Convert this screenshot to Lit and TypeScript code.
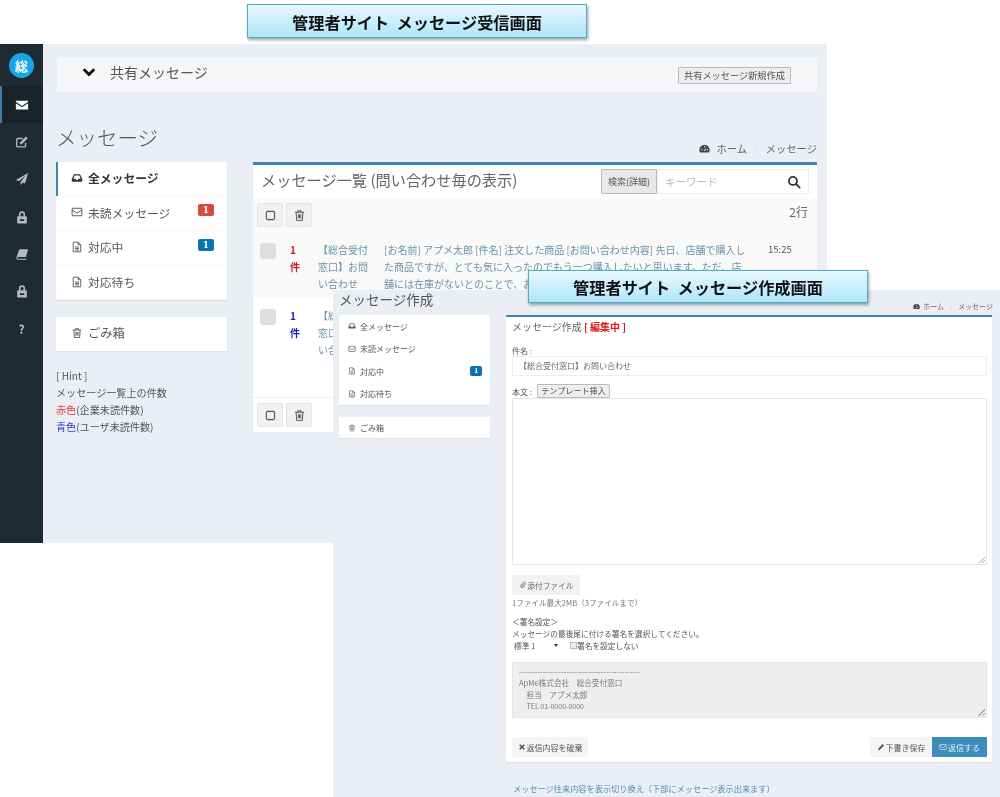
import { LitElement, html, css } from 'lit';
import { customElement } from 'lit/decorators.js';

const icons: Record<string, unknown> = {
  envelope: html`<svg viewBox="0 0 16 16"><path fill="currentColor" d="M1 3h14v1.4L8 9 1 4.4z"/><path fill="currentColor" d="M1 6l7 4.6L15 6v7H1z"/></svg>`,
  envelopeO: html`<svg viewBox="0 0 16 16" fill="none" stroke="currentColor" stroke-width="1.3"><rect x="1.5" y="3" width="13" height="10" rx="1"/><path d="M1.5 5.2L8 9.6l6.5-4.4"/></svg>`,
  edit: html`<svg viewBox="0 0 16 16" fill="none" stroke="currentColor" stroke-width="1.5"><path d="M12 9v3.5a1 1 0 0 1-1 1H3a1 1 0 0 1-1-1V5a1 1 0 0 1 1-1h6"/><path fill="currentColor" stroke="none" d="M6 8.2L12.6 1.8l2 2L8 10.4l-2.4.4z"/></svg>`,
  plane: html`<svg viewBox="0 0 16 16"><path fill="currentColor" d="M15 1L1 9l3.6 1.5L12 4l-5.6 7.3V15l2.3-3 2.8 1.2z"/></svg>`,
  lock: html`<svg viewBox="0 0 16 16"><path fill="currentColor" fill-rule="evenodd" d="M4.5 7V5a3.5 3.5 0 0 1 7 0v2h1a1 1 0 0 1 1 1v6.5a1 1 0 0 1-1 1h-9a1 1 0 0 1-1-1V8a1 1 0 0 1 1-1zm1.8 0h3.4V5a1.700 1.700 0 0 0-3.400 0zM5.500 10.500v2h5v-2z"/></svg>`,
  book: html`<svg viewBox="0 0 16 16"><path fill="currentColor" d="M5 2.500h10l-2.500 9H3.800a1 1 0 0 0 0 2h9.400l-.4 1H3.500A2 2 0 0 1 1.600 12z"/></svg>`,
  inbox: html`<svg viewBox="0 0 16 16"><path fill="currentColor" fill-rule="evenodd" d="M4 3h8l3 6v3a1 1 0 0 1-1 1H2a1 1 0 0 1-1-1V9zm.9 1.500L3 9h3l1 1.500h2L10 9h3l-1.900-4.500z"/></svg>`,
  file: html`<svg viewBox="0 0 16 16" fill="none" stroke="currentColor" stroke-width="1.2"><path d="M3 1.600h6.500L13 5v9.400H3z"/><path d="M9.500 1.600V5H13M5.500 8h5M5.500 10h5M5.500 12h5"/></svg>`,
  trash: html`<svg viewBox="0 0 16 16" fill="none" stroke="currentColor" stroke-width="1.2"><path d="M2.500 4h11M6 4V2.200h4V4M3.800 4l.7 10h7l.7-10M6.500 6.500v5M8 6.500v5M9.500 6.500v5"/></svg>`,
  square: html`<svg viewBox="0 0 16 16" fill="none" stroke="currentColor" stroke-width="1.4"><rect x="3" y="3" width="10" height="10" rx="1.500"/></svg>`,
  search: html`<svg viewBox="0 0 16 16" fill="none" stroke="currentColor" stroke-width="2"><circle cx="6.800" cy="6.800" r="4.600"/><path d="M10.200 10.200L14.500 14.500" stroke-linecap="round"/></svg>`,
  chevron: html`<svg viewBox="0 0 16 16" fill="none" stroke="currentColor" stroke-width="3.200"><path d="M2 4.800l6 6 6-6"/></svg>`,
  gauge: html`<svg viewBox="0 0 16 16"><path fill="currentColor" fill-rule="evenodd" d="M8 2.500a7.500 7.500 0 0 1 7.500 7.500c0 1.400-.4 2.700-1 3.800h-13a7.500 7.500 0 0 1-1-3.800A7.500 7.500 0 0 1 8 2.500zM7.200 4.200v2h1.600v-2zM3 9v1.500h2V9zm8 0v1.500h2V9zM7 11.800h2L10.500 6z"/></svg>`,
  clip: html`<svg viewBox="0 0 16 16" fill="none" stroke="currentColor" stroke-width="1.500"><path d="M13.500 8l-5 5a3 3 0 0 1-4.500-4.500l6-6a2 2 0 0 1 3 3L7.500 11a.9.9 0 0 1-1.500-1.500L10.500 5"/></svg>`,
  pencil: html`<svg viewBox="0 0 16 16"><path fill="currentColor" d="M11 2l3 3-8.500 8.500L2 14.500l1-3.500z"/></svg>`,
  times: html`<svg viewBox="0 0 16 16" fill="none" stroke="currentColor" stroke-width="3.400"><path d="M3.500 3.500l9 9M12.500 3.500l-9 9"/></svg>`,
};

const icon = (name: string) => html`<span class="ic">${icons[name]}</span>`;

@customElement('app-root')
export class AppRoot extends LitElement {
  static styles = css`
    :host {
      display: block;
      position: relative;
      width: 1000px;
      height: 797px;
      overflow: hidden;
      background: #fff;
      color: #666;
      font-family: 'Noto Sans CJK JP', 'Noto Sans', sans-serif;
      font-size: 11px;
      filter: blur(0.3px);
    }
    * { box-sizing: border-box; }
    .ic { display: inline-flex; flex: none; width: 1em; height: 1em; }
    .ic svg { width: 100%; height: 100%; display: block; }

    .caption {
      position: absolute;
      z-index: 5;
      display: flex;
      align-items: center;
      justify-content: center;
      width: 340px;
      height: 34px;
      padding-top: 1px;
      border: 1px solid #58a9c1;
      background: linear-gradient(#e6f8fe, #aee6f9);
      box-shadow: 1px 2px 3px rgba(60, 90, 100, 0.55);
      color: #111;
      font-size: 16.2px;
      font-weight: 700;
      white-space: pre;
    }
    .caption.one { left: 247px; top: 4px; }
    .caption.two { left: 528px; top: 270px; height: 33px; }

    .window { position: absolute; background: #ebeef5; }
    .inbox { left: 0; top: 44px; width: 827px; height: 499px; display: flex; }
    .compose {
      left: 333px;
      top: 290px;
      width: 667px;
      height: 507px;
      z-index: 2;
      display: grid;
      grid-template-columns: 151px 486px;
      grid-template-rows: 25px auto;
      column-gap: 16px;
      padding-left: 6px;
      align-content: start;
    }

    .side { width: 43px; background: #1f2b32; display: flex; flex-direction: column; }
    .avatar {
      width: 25px;
      height: 25px;
      margin: 9px 0 8px 9px;
      border-radius: 50%;
      background: #17a6ea;
      color: #fff;
      font-size: 13px;
      font-weight: 700;
      display: flex;
      align-items: center;
      justify-content: center;
    }
    .nav { height: 37.3px; display: flex; align-items: center; justify-content: center; color: #b4bbbe; font-size: 14px; }
    .nav.on { background: #18232a; color: #fff; box-shadow: inset 2px 0 0 #3b82ae; }
    .nav b { font-size: 12px; }

    .main { flex: 1; padding: 13px 10px 0 13px; }
    .shared {
      height: 36px;
      margin-left: 1px;
      background: #f5f6f7;
      border-bottom: 1px solid #e6e8ec;
      display: flex;
      align-items: center;
      padding: 0 26px 5px 25px;
      font-size: 14px;
      color: #555;
    }
    .shared .ic { font-size: 14px; color: #111; margin-right: 14px; }
    .shared span.t { flex: 1; }
    .shared button { height: 17px; width: 113px; margin-top: 6px; font-size: 9.2px; white-space: nowrap; }
    button {
      font: inherit;
      color: #555;
      padding: 0;
      border: 1px solid #bbb;
      border-radius: 1px;
      background: #eee;
    }

    .head { height: 69px; display: flex; justify-content: space-between; align-items: flex-end; padding-bottom: 6px; }
    .head h1 { margin: 0 0 4px; font-size: 20.5px; font-weight: 300; color: #555; line-height: 30px; }
    .crumb { display: flex; align-items: center; gap: 6px; font-size: 10.3px; color: #666; }
    .crumb .ic { color: #444; font-size: 11px; }
    .crumb i { color: #ccc; font-style: normal; font-size: 9px; margin: 0 2px; }

    .cols { display: flex; gap: 26px; align-items: flex-start; }
    .left { width: 171px; flex: none; }
    .card { background: #fff; box-shadow: 0 1px 1px rgba(0, 0, 0, 0.05); }
    .menu a {
      height: 34.6px;
      display: flex;
      align-items: center;
      gap: 5px;
      padding: 0 13px 2px 15px;
      font-size: 11.8px;
      color: #555;
      border-bottom: 1px solid #f7f7f7;
    }
    .menu a.on { box-shadow: inset 2px 0 0 #3f87b2; color: #333; font-weight: 700; }
    .menu a .ic { font-size: 12px; }
    .menu a span.t { flex: 1; }
    .badge {
      color: #fff;
      font-size: 9px;
      font-weight: 700;
      border-radius: 2px;
      padding: 0 5px;
      line-height: 12px;
      font-family: 'DejaVu Serif', serif;
      margin-top: -4px;
    }
    .badge.red { background: #d9493c; }
    .badge.blue { background: #0b73b4; }
    .bin { margin-top: 17px; height: 34px; display: flex; align-items: center; gap: 5px; padding: 0 0 2px 15px; font-size: 12.3px; color: #555; }
    .bin .ic { font-size: 12px; }
    .hint { margin-top: 16px; font-size: 10.1px; line-height: 17px; color: #555; }
    .hint .r { color: #e23b3b; }
    .hint .b { color: #2a3fc0; }

    .panel { width: 564px; height: 270px; background: #fff; border-top: 3px solid #3d86b3; }
    .panel-top { height: 33px; display: flex; align-items: flex-start; justify-content: space-between; padding: 0 8px; }
    .panel-top h2 { margin: 3px 0 0; font-size: 15.2px; font-weight: 400; color: #666; white-space: nowrap; }
    .search { display: flex; height: 25px; width: 208px; margin-top: 4px; }
    .search button { width: 56px; font-size: 9px; background: #e8e8e8; }
    .search div { flex: 1; display: flex; align-items: center; justify-content: space-between; border: 1px solid #eee; padding: 0 7px; color: #bbb; font-size: 10.5px; }
    .search .ic { color: #333; font-size: 14px; }
    .tools { height: 34px; background: #fafafa; display: flex; padding: 5px 9px 0 4px; justify-content: space-between; color: #666; font-size: 12px; }
    .tool { display: flex; gap: 3px; }
    .tool button { width: 26px; height: 24px; background: #f1f1f1; border-color: #e4e4e4; font-size: 13px; display: flex; align-items: center; justify-content: center; border-radius: 2px; }
    .row { display: flex; padding: 9px 0 0 7px; font-size: 10px; line-height: 17px; height: 66px; background: #f9f9f9; }
    .row.two { background: #fff; height: 99px; }
    .row .check { width: 16px; height: 16px; margin-top: 2px; background: #dcdfe0; border-radius: 3px; flex: none; }
    .row .count { width: 28px; margin-left: 14px; font-weight: 700; flex: none; }
    .row .subject { width: 50px; flex: none; color: #6a92ab; white-space: nowrap; }
    .row .msg { width: 384px; flex: none; margin-left: 16px; color: #6a92ab; white-space: nowrap; overflow: hidden; }
    .row .time { color: #555; font-size: 9.5px; white-space: nowrap; }
    .unread-red { color: #cf1d2e; }
    .unread-blue { color: #1c1ea8; }
    .foot { padding: 5px 4px; border-top: 1px solid #eee; }

    .compose h1 { margin: 0; font-size: 13.5px; font-weight: 400; color: #555; line-height: 19px; }
    .compose .crumb { justify-content: flex-end; font-size: 7px; gap: 3px; padding: 11px 0 0; align-self: start; margin-right: -1px; }
    .compose .crumb .ic { font-size: 7px; }
    .compose .crumb i { font-size: 7px; margin: 0 3px; }
    .compose .menu a { height: 22.5px; font-size: 8px; padding: 0 8px 0 9px; gap: 4px; border: 0; }
    .compose .menu a .ic { font-size: 8px; }
    .compose .badge { font-size: 6.5px; padding: 0 3.5px; line-height: 10px; margin: 0; }
    .compose .bin { margin-top: 12px; height: 21px; font-size: 8px; padding: 0 0 0 9px; gap: 4px; }
    .compose .bin .ic { font-size: 8px; }

    .form { height: 447px; background: #fff; border-top: 2px solid #3d86b3; padding: 0 5px 0 6px; font-size: 8px; color: #555; display: flex; flex-direction: column; box-shadow: 0 1px 1px rgba(0, 0, 0, 0.05); }
    .form > * { flex: none; }
    .form h2 { margin: 2px 0 0; height: 16px; font-size: 10px; font-weight: 400; line-height: 16px; color: #666; }
    .form h2 b { color: #e01b1b; }
    .lbl { margin-top: 10px; line-height: 12px; height: 12px; margin-bottom: -1px; }
    .box { height: 20px; border: 1px solid #eceef0; padding: 0 0 0 6px; line-height: 18px; color: #666; }
    .body-row { display: flex; align-items: center; gap: 5px; height: 14px; margin-top: 8px; }
    .body-row button { width: 73px; height: 14px; font-size: 8.1px; line-height: 12px; background: #eee; }
    .area { height: 167px; border: 1px solid #e4e6e9; position: relative; }
    .grip { position: absolute; right: 1px; bottom: 1px; width: 7px; height: 7px; background: linear-gradient(135deg, transparent 50%, #aaa 50%, #aaa 60%, transparent 60%, transparent 75%, #aaa 75%, #aaa 85%, transparent 85%); }
    .attach { width: 68px; height: 20px; margin-top: 10px; background: #f2f2f2; display: flex; align-items: center; justify-content: center; gap: 1px; font-size: 7.7px; color: #666; }
    .note { margin-top: 2px; font-size: 7.6px; line-height: 12px; color: #777; }
    .sign { margin-top: 7px; line-height: 11.5px; font-size: 7.7px; }
    .sign-row { display: flex; align-items: center; gap: 8px; height: 13px; }
    .select { width: 50px; height: 13px; display: flex; justify-content: space-between; align-items: center; padding: 0 4px 0 2px; background: #fff; font-size: 7.7px; }
    .select i { border: 2.5px solid transparent; border-top: 3px solid #333; border-bottom: 0; }
    .check-lbl { display: flex; align-items: center; font-size: 7.7px; }
    .check-lbl u { width: 7px; height: 7px; border: 1px solid #bbb; background: #eee; }
    .sig { position: relative; margin-top: 10px; height: 56px; background: #eeeeef; border: 1px solid #e4e4e4; padding: 3px 0 0 6px; font-size: 7.6px; line-height: 11.3px; color: #777; white-space: pre; }
    .sig span { font-size: 7px; }
    .actions { margin-top: 19px; display: flex; justify-content: space-between; }
    .actions div { display: flex; }
    .actions button { height: 20px; border: 0; background: #f4f4f4; font-size: 8px; display: inline-flex; align-items: center; justify-content: center; gap: 1px; color: #555; white-space: nowrap; }
    .actions .discard { width: 76px; }
    .actions .draft { width: 62px; }
    .actions .send { width: 55px; background: #3d8dbc; color: #dff0fa; }
    .link { grid-column: 2; margin: 20px 0 0 7px; font-size: 8.2px; color: #4b90b5; white-space: nowrap; }
  `;

  private renderSide() {
    const items = ['envelope', 'edit', 'plane', 'lock', 'book', 'lock'];
    return html`
      <div class="side">
        <div class="avatar">総</div>
        ${items.map((n, i) => html`<div class="nav ${i === 0 ? 'on' : ''}">${icon(n)}</div>`)}
        <div class="nav"><b>?</b></div>
      </div>
    `;
  }

  private renderMenu(active: boolean, unread: boolean) {
    return html`
      <div class="card menu">
        <a class=${active ? 'on' : ''}>${icon('inbox')}<span class="t">全メッセージ</span></a>
        <a>${icon('envelopeO')}<span class="t">未読メッセージ</span>${unread ? html`<span class="badge red">1</span>` : ''}</a>
        <a>${icon('file')}<span class="t">対応中</span><span class="badge blue">1</span></a>
        <a>${icon('file')}<span class="t">対応待ち</span></a>
      </div>
      <div class="card bin">${icon('trash')}ごみ箱</div>
    `;
  }

  private renderRow(cls: string, color: string) {
    return html`
      <div class="row ${cls}">
        <div class="check"></div>
        <div class="count ${color}">1<br />件</div>
        <div class="subject">【総合受付<br />窓口】お問<br />い合わせ</div>
        <div class="msg">
          [お名前] アプメ太郎 [件名] 注文した商品 [お問い合わせ内容] 先日、店舗で購入し<br />
          た商品ですが、とても気に入ったのでもう一つ購入したいと思います。ただ、店<br />
          舗には在庫がないとのことで、お
        </div>
        <div class="time">15:25</div>
      </div>
    `;
  }

  private renderTools() {
    return html`<div class="tool"><button>${icon('square')}</button><button>${icon('trash')}</button></div>`;
  }

  render() {
    return html`
      <div class="caption one">管理者サイト  メッセージ受信画面</div>
      <div class="caption two">管理者サイト  メッセージ作成画面</div>

      <div class="window inbox">
        ${this.renderSide()}
        <div class="main">
          <div class="shared">
            ${icon('chevron')}<span class="t">共有メッセージ</span>
            <button>共有メッセージ新規作成</button>
          </div>
          <div class="head">
            <h1>メッセージ</h1>
            <div class="crumb">${icon('gauge')}ホーム<i>›</i>メッセージ</div>
          </div>
          <div class="cols">
            <div class="left">
              ${this.renderMenu(true, true)}
              <div class="hint">
                [ Hint ]<br />
                メッセージ一覧上の件数<br />
                <span class="r">赤色</span>(企業未読件数)<br />
                <span class="b">青色</span>(ユーザ未読件数)
              </div>
            </div>
            <div class="panel">
              <div class="panel-top">
                <h2>メッセージ一覧 (問い合わせ毎の表示)</h2>
                <div class="search">
                  <button>検索(詳細)</button>
                  <div>キーワード${icon('search')}</div>
                </div>
              </div>
              <div class="tools">${this.renderTools()}<span>2行</span></div>
              ${this.renderRow('', 'unread-red')}
              ${this.renderRow('two', 'unread-blue')}
              <div class="foot">${this.renderTools()}</div>
            </div>
          </div>
        </div>
      </div>

      <div class="window compose">
        <h1>メッセージ作成</h1>
        <div class="crumb">${icon('gauge')}ホーム<i>›</i>メッセージ</div>
        <div class="left-col">${this.renderMenu(false, false)}</div>
        <div class="form">
          <h2>メッセージ作成 <b>[ 編集中 ]</b></h2>
          <div class="lbl">件名 :</div>
          <div class="box">【総合受付窓口】お問い合わせ</div>
          <div class="body-row">本文 :<button>テンプレート挿入</button></div>
          <div class="area"><div class="grip"></div></div>
          <div class="attach">${icon('clip')}添付ファイル</div>
          <div class="note">1ファイル最大2MB（3ファイルまで）</div>
          <div class="sign">＜署名設定＞<br />メッセージの最後尾に付ける署名を選択してください。</div>
          <div class="sign-row">
            <div class="select">標準 1<i></i></div>
            <div class="check-lbl"><u></u>署名を設定しない</div>
          </div>
          <div class="sig">----------------------------------------------
ApMe株式会社　総合受付窓口
　担当　アプメ太郎
　<span>TEL 01-0000-0000</span><div class="grip"></div></div>
          <div class="actions">
            <button class="discard">${icon('times')}返信内容を破棄</button>
            <div>
              <button class="draft">${icon('pencil')}下書き保存</button><button class="send">${icon('envelopeO')}返信する</button>
            </div>
          </div>
        </div>
        <div class="link">メッセージ往来内容を表示切り換え（下部にメッセージ表示出来ます）</div>
      </div>
    `;
  }
}
